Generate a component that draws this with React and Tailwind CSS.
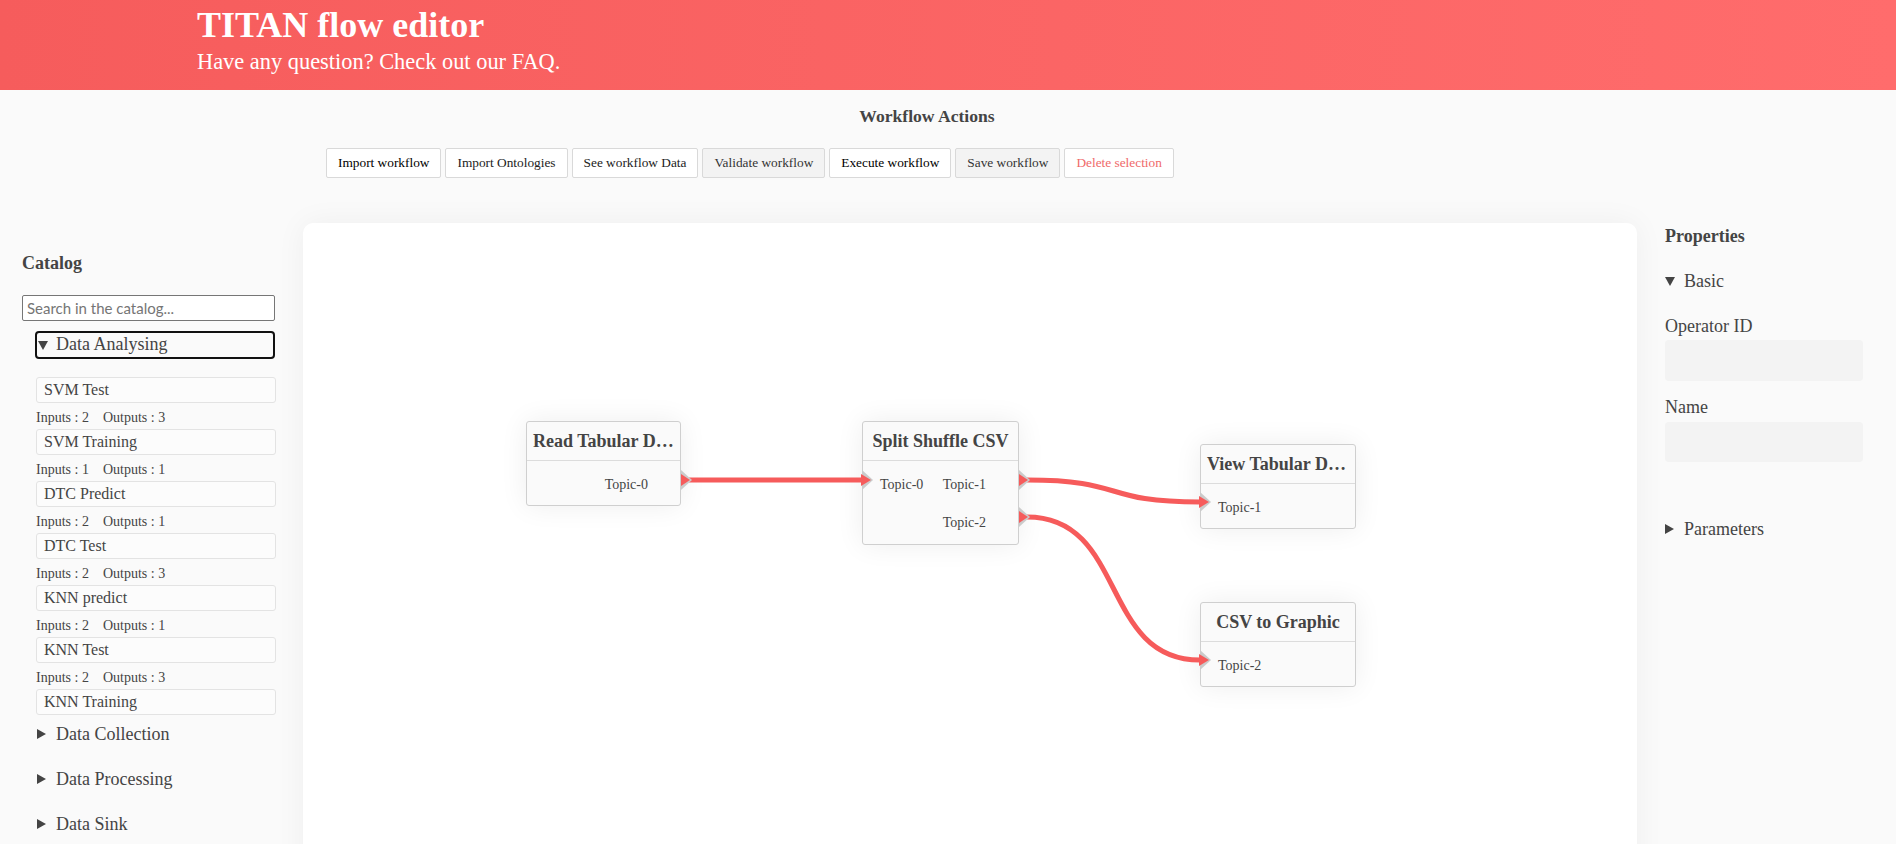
import React from "react";

const catalogItems = [
  { name: "SVM Test", inputs: 2, outputs: 3 },
  { name: "SVM Training", inputs: 1, outputs: 1 },
  { name: "DTC Predict", inputs: 2, outputs: 1 },
  { name: "DTC Test", inputs: 2, outputs: 3 },
  { name: "KNN predict", inputs: 2, outputs: 1 },
  { name: "KNN Test", inputs: 2, outputs: 3 },
  { name: "KNN Training", inputs: 2, outputs: 1 },
];

const actions = [
  { label: "Import workflow", cls: "bg-white text-black" },
  { label: "Import Ontologies", cls: "bg-white text-[#222]" },
  { label: "See workflow Data", cls: "bg-white text-[#222]" },
  { label: "Validate workflow", cls: "bg-[#f3f3f3] text-[#333]" },
  { label: "Execute workflow", cls: "bg-white text-black" },
  { label: "Save workflow", cls: "bg-[#f3f3f3] text-[#333]" },
  { label: "Delete selection", cls: "bg-white text-[#f06a6a]" },
];

// connector points in canvas coordinates
const links = [
  { x1: 386, y1: 257, x2: 559, y2: 257 },
  { x1: 724, y1: 257, x2: 897, y2: 279 },
  { x1: 724, y1: 294, x2: 897, y2: 437 },
];
const outputs = [
  { x: 378, y: 257 },
  { x: 716, y: 257 },
  { x: 716, y: 294 },
];
const inputs = [
  { x: 559, y: 257 },
  { x: 897, y: 279 },
  { x: 897, y: 437 },
];

const Down = () => (
  <svg width="10" height="10" viewBox="0 0 10 10" className="shrink-0">
    <polygon points="0,1 10,1 5,10" fill="#444" />
  </svg>
);

const Right = () => (
  <svg width="9" height="10" viewBox="0 0 9 10" className="shrink-0">
    <polygon points="0,0 9,5 0,10" fill="#444" />
  </svg>
);

const Node = ({ title, left, top, width, height, inputs = [], outputs = [] }) => {
  const rows = Math.max(inputs.length, outputs.length);
  return (
    <div
      className="absolute bg-[#fafafa] border border-[#cfcfcf] rounded-[3px] shadow-[0_0_28px_rgba(0,0,0,0.07)]"
      style={{ left, top, width, height }}
    >
      <div className="h-[39px] border-b border-[#dcdcdc] px-[6px] text-center text-[18px] font-bold leading-[39px] text-[#444] truncate">
        {title}
      </div>
      <div className="pt-[5px]">
        {Array.from({ length: rows }).map((_, i) => (
          <div key={i} className="h-[38px] flex text-[14px] leading-[38px] text-[#444]">
            <div className="w-1/2 pl-[17px]">{inputs[i] || ""}</div>
            <div className="w-1/2 pr-[32px] text-right">{outputs[i] || ""}</div>
          </div>
        ))}
      </div>
    </div>
  );
};

export default function App() {
  return (
    <div className="min-h-screen bg-[#fafafa] font-['Liberation_Serif',serif] text-[#444] overflow-hidden">
      {/* Header */}
      <div className="h-[90px] bg-gradient-to-r from-[#f65c5c] to-[#ff6c6c] pl-[197px] text-white">
        <h1 className="pt-[7px] text-[36px] font-bold leading-none">TITAN flow editor</h1>
        <p className="mt-[8px] text-[22.4px] leading-none">Have any question? Check out our FAQ.</p>
      </div>

      {/* Workflow actions */}
      <div className="w-[1854px] pt-[18px] text-center text-[17.6px] font-bold leading-none text-[#444]">
        Workflow Actions
      </div>
      <div className="mt-[22px] pl-[326px] flex gap-[4px]">
        {actions.map((a) => (
          <button
            key={a.label}
            className={`h-[30px] px-[11px] border border-[#d9d9d9] rounded-[2px] text-[13.33px] leading-none ${a.cls}`}
          >
            {a.label}
          </button>
        ))}
      </div>

      {/* Columns */}
      <div className="mt-[45px] flex">
        {/* Catalog */}
        <div className="w-[303px] shrink-0 pl-[22px]">
          <h3 className="pt-[31px] text-[18px] font-bold leading-none">Catalog</h3>
          <input
            placeholder="Search in the catalog..."
            className="mt-[23px] w-[253px] h-[26px] border border-[#767676] rounded-[2px] bg-white px-[4px] font-['Lato',sans-serif] text-[15px] text-[#333] placeholder:text-[#757575] outline-none"
          />
          <div className="mt-[10px] ml-[13px] w-[240px] h-[28px] border-2 border-[#111] rounded-[4px] flex items-center gap-[8px] pl-[1px] text-[18px]">
            <Down />
            <span>Data Analysing</span>
          </div>
          <div className="ml-[14px] w-[240px] h-[357px] overflow-hidden pt-[18px]">
            {catalogItems.map((it, i) => (
              <div key={it.name}>
                <div className="h-[26px] border border-[#e3e3e3] rounded-[3px] bg-[#fcfcfc] px-[7px] text-[16px] leading-[24px]">
                  {it.name}
                </div>
                {i < catalogItems.length - 1 && (
                  <div className="h-[26px] pt-[5px] text-[14px] leading-[20px]">
                    <span>Inputs : {it.inputs}</span>
                    <span className="ml-[14px]">Outputs : {it.outputs}</span>
                  </div>
                )}
              </div>
            ))}
          </div>
          {["Data Collection", "Data Processing", "Data Sink"].map((c) => (
            <div key={c} className="h-[45px] pt-[4px] pl-[15px] flex items-start gap-[10px] text-[18px] leading-[28px]">
              <span className="h-[28px] flex items-center">
                <Right />
              </span>
              <span>{c}</span>
            </div>
          ))}
        </div>

        {/* Canvas */}
        <div className="relative w-[1334px] h-[700px] shrink-0 bg-white rounded-[10px] shadow-[0_0_30px_rgba(0,0,0,0.05)]">
          <Node title="Read Tabular Data" left={223} top={198} width={155} height={85} outputs={["Topic-0"]} />
          <Node
            title="Split Shuffle CSV"
            left={559}
            top={198}
            width={157}
            height={124}
            inputs={["Topic-0"]}
            outputs={["Topic-1", "Topic-2"]}
          />
          <Node title="View Tabular Data" left={897} top={221} width={156} height={85} inputs={["Topic-1"]} />
          <Node title="CSV to Graphic" left={897} top={379} width={156} height={85} inputs={["Topic-2"]} />

          <svg className="absolute inset-0 pointer-events-none" width="1334" height="700">
            {links.map((l, i) => (
              <path
                key={i}
                d={`M ${l.x1} ${l.y1} C ${l.x1 + 100} ${l.y1}, ${l.x2 - 100} ${l.y2}, ${l.x2} ${l.y2}`}
                fill="none"
                stroke="#f65b5b"
                strokeWidth="5"
              />
            ))}
            {outputs.map((o, i) => (
              <g key={i}>
                <polygon points={`${o.x},${o.y - 10} ${o.x + 11},${o.y} ${o.x},${o.y + 10}`} fill="#cbcbcb" />
                <polygon points={`${o.x},${o.y - 6} ${o.x + 9},${o.y} ${o.x},${o.y + 6}`} fill="#f65b5b" />
              </g>
            ))}
            {inputs.map((p, i) => (
              <g key={i}>
                <polygon points={`${p.x},${p.y - 10} ${p.x + 11},${p.y} ${p.x},${p.y + 10}`} fill="#cbcbcb" />
                <polygon points={`${p.x - 1},${p.y - 6} ${p.x + 9},${p.y} ${p.x - 1},${p.y + 6}`} fill="#f65b5b" />
              </g>
            ))}
          </svg>
        </div>

        {/* Properties */}
        <div className="w-[259px] shrink-0 pl-[28px]">
          <h3 className="pt-[4px] text-[18px] font-bold leading-none">Properties</h3>
          <div className="mt-[27px] flex items-center gap-[9px] text-[18px] leading-none">
            <Down />
            <span>Basic</span>
          </div>
          <div className="mt-[27px] text-[18px] leading-none">Operator ID</div>
          <div className="mt-[5px] w-[198px] h-[41px] bg-[#f3f3f3] rounded-[4px]" />
          <div className="mt-[17px] text-[18px] leading-none">Name</div>
          <div className="mt-[6px] w-[198px] h-[40px] bg-[#f3f3f3] rounded-[4px]" />
          <div className="mt-[58px] flex items-center gap-[10px] text-[18px] leading-none">
            <Right />
            <span>Parameters</span>
          </div>
        </div>
      </div>
    </div>
  );
}
